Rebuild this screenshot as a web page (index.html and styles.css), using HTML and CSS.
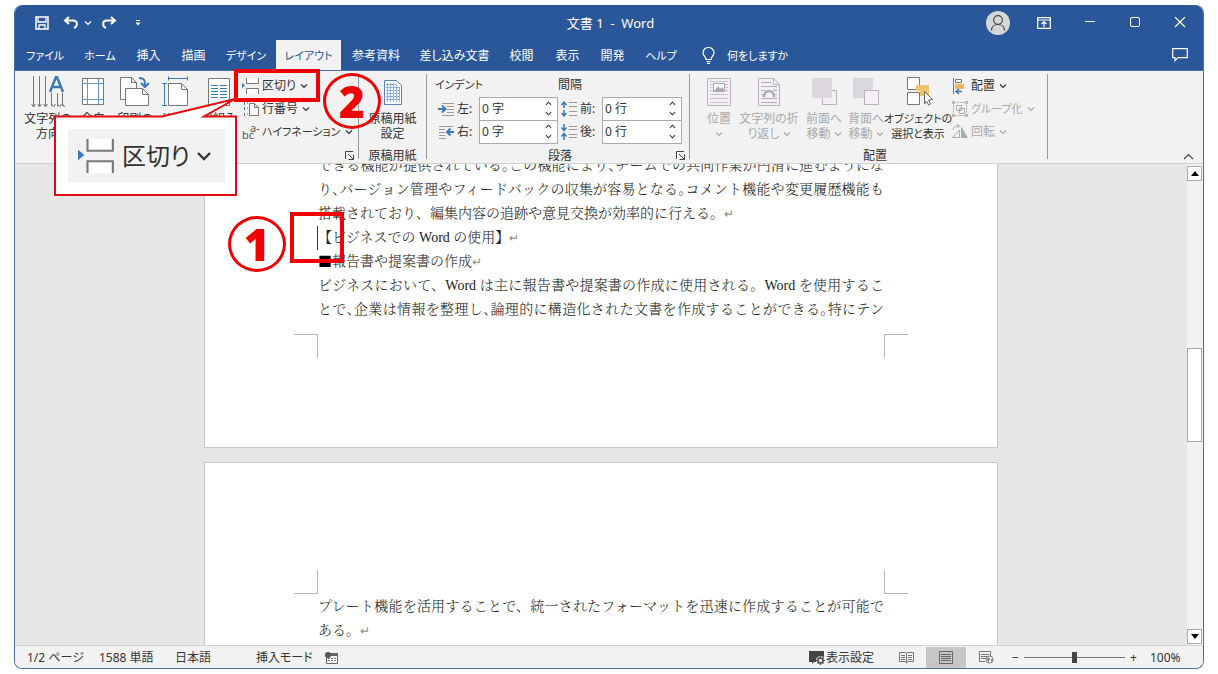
FILE: index.html
```html
<!DOCTYPE html>
<html lang="ja">
<head>
<meta charset="utf-8">
<meta name="viewport" content="width=device-width, initial-scale=1">
<title>文書 1 - Word</title>
<link rel="stylesheet" href="styles.css">
</head>
<body>
<svg class="defs" aria-hidden="true">
  <symbol id="chev" viewBox="0 0 8 8"><path d="M1 2.5 4 5.5 7 2.5" fill="none" stroke="currentColor" stroke-width="1.2"/></symbol>
  <symbol id="launch" viewBox="0 0 9 9"><path d="M.5 8V.5H8M3 3l5 5M8.500 3.500v5h-5" fill="none" stroke="#444"/></symbol>
  <symbol id="break" viewBox="0 0 18 18"><path d="M4.500 1v5.500h12V1M4.500 17v-5.500h12V17" fill="#fff" stroke="#777"/><path d="M0 6v5l3-2.500z" fill="#3a78b8"/></symbol>
</svg>
<div class="window">
  <header class="titlebar">
    <div class="quick">
      <button aria-label="上書き保存"><svg width="14" height="14" viewBox="0 0 14 14"><path d="M1 1h12v12H1z" fill="none" stroke="#fff" stroke-width="1.500"/><path d="M3 1.500v4.500h8V1.500M4 13V9h6v4" fill="none" stroke="#fff" stroke-width="1.300"/></svg></button>
      <button class="undo" aria-label="元に戻す"><svg width="16" height="14" viewBox="0 0 16 14"><path d="M6 1 2 4.500 6 8M2 4.500h8c5 0 5 6 1 7.500" fill="none" stroke="#fff" stroke-width="2"/></svg></button>
      <button aria-label="元に戻す履歴"><svg width="8" height="8"><use href="#chev"/></svg></button>
      <button class="redo" aria-label="やり直し"><svg width="16" height="14" viewBox="0 0 16 14"><path d="M10 1 14 4.500 10 8M14 4.500H6c-5 0-5 6-1 7.500" fill="none" stroke="#fff" stroke-width="2"/></svg></button>
      <button class="custom" aria-label="クイックアクセスのカスタマイズ"><svg width="6" height="6" viewBox="0 0 6 6"><path d="M1 .5h4" stroke="#fff"/><path d="M.5 2.500h5L3 5.500z" fill="#fff"/></svg></button>
    </div>
    <h1 class="title">文書 1&nbsp; -&nbsp; Word</h1>
    <div class="syscontrols">
      <button aria-label="アカウント"><svg width="24" height="24" viewBox="0 0 24 24"><circle cx="12" cy="12" r="12" fill="#d6d6d6"/><circle cx="12" cy="9" r="4.300" fill="none" stroke="#444" stroke-width="1.200"/><path d="M5.500 19.500c0-8 13-8 13 0" fill="none" stroke="#444" stroke-width="1.200"/></svg></button>
      <button aria-label="リボンの表示オプション"><svg width="14" height="12" viewBox="0 0 14 12"><path d="M.7.700h12.600v10.600H.7zM1 3h12M7 10V4.500M4.500 7 7 4.500 9.500 7" fill="none" stroke="#fff" stroke-width="1.200"/></svg></button>
      <button aria-label="最小化"><svg width="12" height="12" viewBox="0 0 12 12"><path d="M1 4.500h10" stroke="#fff"/></svg></button>
      <button aria-label="最大化"><svg width="12" height="12" viewBox="0 0 12 12"><rect x="1.500" y=".5" width="9" height="9" rx="1.500" fill="none" stroke="#fff"/></svg></button>
      <button aria-label="閉じる"><svg width="12" height="12" viewBox="0 0 12 12"><path d="m1 0 10 10M11 0 1 10" stroke="#fff" stroke-width="1.200"/></svg></button>
    </div>
  </header>
  <nav class="tabs">
    <button class="kana">ファイル</button><button class="kana">ホーム</button><button>挿入</button><button>描画</button><button class="kana">デザイン</button><button class="kana active">レイアウト</button><button>参考資料</button><button>差し込み文書</button><button>校閲</button><button>表示</button><button>開発</button><button class="kana">ヘルプ</button>
    <button class="tell kana"><svg width="13" height="17" viewBox="0 0 13 17"><path d="M4 12.500c0-3-3-3.500-3-7a5.500 5 0 0 1 11 0c0 3.500-3 4-3 7zM4.500 14.500h4M5 16.300h3" fill="none" stroke="#fff" stroke-width="1.200"/></svg>何をしますか</button>
    <button class="comment" aria-label="コメント"><svg width="16" height="14" viewBox="0 0 16 14"><path d="M.7.700h14.600v9H6l-3 3v-3H.7z" fill="none" stroke="#fff" stroke-width="1.200"/></svg></button>
  </nav>
  <section class="ribbon">
    <div class="group setup">
      <div class="tools">
        <button class="big dir"><svg width="34" height="32" viewBox="0 0 34 32"><path d="M2.500 0v30M8.500 0v30M14.500 0v30M20.500 17v13M26.500 17v13M31.500 17v13" stroke="#777"/><path d="m.5 28 2 3 2-3m2 0 2 3 2-3m2 0 2 3 2-3m4 0 2 3 2-3m2 0 2 3 2-3m1 0 2 3 2-3" fill="none" stroke="#777"/><path d="m19 16 6-15h1l6 15M21 11h9" fill="none" stroke="#3a78b8" stroke-width="2.500"/></svg><span>文字列の<br>方向</span></button>
        <button class="big"><svg width="32" height="32" viewBox="0 0 32 32"><path d="M5.500 2.500h21v26h-21z" fill="#fff" stroke="#777"/><path d="M10.500 3v25M21.500 3v25M6 7.500h20M6 23.500h20" stroke="#5f9bd1"/></svg><span>余白</span></button>
        <button class="big"><svg width="32" height="32" viewBox="0 0 32 32"><path d="M1.500 1.500h11l5 5v17h-16zM12.500 1.500v5h5" fill="#fff" stroke="#777"/><path d="M6.500 12.500h17l6 6v11h-23zM23.500 12.500v6h6" fill="#fff" stroke="#777"/><path d="M20 2c6 0 6 3 6 8M22 7l4 4 4-4" fill="none" stroke="#3a78b8" stroke-width="2"/></svg><span>印刷の<br>向き</span></button>
        <button class="big"><svg width="32" height="32" viewBox="0 0 32 32"><path d="M7.500 7.500h13l6 6v16h-19zM20.500 7.500v6h6" fill="#fff" stroke="#777"/><path d="M7 2.500h19M7.500.5v4M26.500.5v4M3.500 7v22M1 7.500h5M1 29.500h5" stroke="#3a78b8"/></svg><span>サイズ</span></button>
        <button class="big"><svg width="32" height="32" viewBox="0 0 32 32"><path d="M5.500 2.500h21v27h-21z" fill="#fff" stroke="#777"/><path d="M8 9.500h7m2 0h7M8 12.500h7m2 0h7M8 15.500h7m2 0h7M8 18.500h7m2 0h7M8 21.500h7m2 0h7" stroke="#3a78b8"/></svg><span>段組み</span></button>
        <div class="stack">
          <button class="small"><svg width="18" height="18"><use href="#break"/></svg>区切り<svg class="c" width="8" height="8"><use href="#chev"/></svg></button>
          <button class="small"><svg width="18" height="18" viewBox="0 0 18 18"><path d="M7.500 3.500h5l4 4v8h-9zM12.500 3.500v4h4" fill="#fff" stroke="#777"/><path d="M2.500 2v3M2.500 7v3M2.500 13v3M5 3h1M5 8h1M5 14h1" stroke="#3a78b8"/></svg>行番号<svg class="c" width="8" height="8"><use href="#chev"/></svg></button>
          <button class="small kana"><svg width="18" height="18" viewBox="0 0 18 18"><text x="0" y="16" class="icotext">bc</text><text x="8" y="9" class="icotext">a-</text></svg>ハイフネーション<svg class="c" width="8" height="8"><use href="#chev"/></svg></button>
        </div>
      </div>
      <div class="caption"><span></span><button aria-label="ページ設定の詳細"><svg width="9" height="9"><use href="#launch"/></svg></button></div>
    </div>
    <div class="group manuscript">
      <div class="tools">
        <button class="big paper"><svg width="32" height="32" viewBox="0 0 32 32"><path d="M7.500 4.500h12l5 5v19h-17z" fill="#fff" stroke="#5d81b8"/><path d="M10.500 7v19M13.500 7v19M16.500 7v19M19.500 9v17M22.500 11v15M9 8.500h10M9 11.500h14M9 14.500h14M9 17.500h14M9 20.500h14M9 23.500h14" stroke="#8fb0dc"/></svg><span>原稿用紙<br>設定</span></button>
      </div>
      <div class="caption">原稿用紙</div>
    </div>
    <div class="group para">
      <div class="fields">
        <fieldset><legend class="kana">インデント</legend>
          <div class="field"><svg width="16" height="14" viewBox="0 0 16 14"><path d="M4 1.500h12M9 4.500h7M9 7.500h7M9 10.500h7M4 13.500h12" stroke="#999"/><path d="M0 7h7M4 3.500 7.500 7 4 10.500" fill="none" stroke="#3a78b8" stroke-width="2"/></svg><label for="il">左:</label><span class="spin"><input id="il" type="text" value="0 字"><span><button aria-label="増やす"><svg width="7" height="7"><use href="#chev"/></svg></button><button aria-label="減らす"><svg width="7" height="7"><use href="#chev"/></svg></button></span></span></div>
          <div class="field"><svg width="16" height="14" viewBox="0 0 16 14"><path d="M1 1.500h14M1 4.500h6M1 7.500h6M1 10.500h6M1 13.500h7" stroke="#999"/><path d="M16 7H9m3.500-3.500L9 7l3.500 3.500" fill="none" stroke="#3a78b8" stroke-width="2"/></svg><label for="ir">右:</label><span class="spin"><input id="ir" type="text" value="0 字"><span><button aria-label="増やす"><svg width="7" height="7"><use href="#chev"/></svg></button><button aria-label="減らす"><svg width="7" height="7"><use href="#chev"/></svg></button></span></span></div>
        </fieldset>
        <fieldset><legend>間隔</legend>
          <div class="field"><svg width="16" height="16" viewBox="0 0 16 16"><path d="M8 1.500h8M8 5.500h8M8 10.500h8M8 14.500h8" stroke="#999"/><path d="M3 7V1M.5 4 3 1l2.500 3M3 9v6M.5 12 3 15l2.500-3" fill="none" stroke="#3a78b8" stroke-width="1.500"/></svg><label for="sb">前:</label><span class="spin"><input id="sb" type="text" value="0 行"><span><button aria-label="増やす"><svg width="7" height="7"><use href="#chev"/></svg></button><button aria-label="減らす"><svg width="7" height="7"><use href="#chev"/></svg></button></span></span></div>
          <div class="field"><svg width="16" height="16" viewBox="0 0 16 16"><path d="M8 2.500h8M8 5.500h8M8 10.500h8M8 13.500h8" stroke="#999"/><path d="M3 0v6M.5 3.500 3 6.500l2.500-3M3 16v-6M.5 12.500 3 9.500l2.500 3" fill="none" stroke="#3a78b8" stroke-width="1.500"/></svg><label for="sa">後:</label><span class="spin"><input id="sa" type="text" value="0 行"><span><button aria-label="増やす"><svg width="7" height="7"><use href="#chev"/></svg></button><button aria-label="減らす"><svg width="7" height="7"><use href="#chev"/></svg></button></span></span></div>
        </fieldset>
      </div>
      <div class="caption">段落<button aria-label="段落の詳細"><svg width="9" height="9"><use href="#launch"/></svg></button></div>
    </div>
    <div class="group arrange">
      <div class="tools">
        <button class="big pos" disabled><svg width="32" height="32" viewBox="0 0 32 32"><path d="M4.500 2.500h23v27h-23z" fill="#f4eff6" stroke="#b9b2bb"/><path d="M7 5.500h18M7 8.500h3m12 0h3M7 11.500h3m12 0h3M7 14.500h3m12 0h3M7 18.500h18M7 22.500h18M7 26.500h18" stroke="#c9c2cb"/><path d="M10.500 7.500h11v8h-11z" fill="#fff" stroke="#aaa"/><path d="m11 15 4-5 2 3 2-2 3 4z" fill="#aaa"/></svg><span>位置<br><svg class="c" width="8" height="8"><use href="#chev"/></svg></span></button>
        <button class="big wrap" disabled><svg width="32" height="32" viewBox="0 0 32 32"><path d="M5.500 2.500h15l6 6v21h-21zM20.500 2.500v6h6" fill="#f4eff6" stroke="#b9b2bb"/><path d="M8 6.500h10M8 10.500h16M8 14.500h4m8 0h4M8 18.500h2m12 0h2M8 22.500h16M8 26.500h16" stroke="#b3adb5"/><path d="M11 21c0-8 10-8 10 0" fill="none" stroke="#aaa" stroke-width="2.500"/></svg><span>文字列の折<br>り返し <svg class="c" width="8" height="8"><use href="#chev"/></svg></span></button>
        <button class="big move" disabled><svg width="32" height="32" viewBox="0 0 32 32"><path d="M14.500 14.500h14v14h-14z" fill="#f4eff6" stroke="#b9b2bb"/><path d="M4 2h20v20H4z" fill="#dcd6de"/></svg><span>前面へ<br>移動 <svg class="c" width="8" height="8"><use href="#chev"/></svg></span></button>
        <button class="big move" disabled><svg width="32" height="32" viewBox="0 0 32 32"><path d="M3 2h20v20H3z" fill="#dcd6de"/><path d="M14.500 14.500h14v14h-14z" fill="#f4eff6" stroke="#b9b2bb"/></svg><span>背面へ<br>移動 <svg class="c" width="8" height="8"><use href="#chev"/></svg></span></button>
        <button class="big objects"><svg width="32" height="32" viewBox="0 0 32 32"><path d="M5.500 1.500h12v12h-12zM5.500 16.500h12v12h-12z" fill="#fff" stroke="#777"/><path d="M14 9h13v11h-9v-5h-4z" fill="#efc36c"/><path d="m22.500 15.500 8 8-4 .5 2 4-2 1-2-4-2 3z" fill="#fff" stroke="#666"/></svg><span class="kana">オブジェクトの<br>選択と表示</span></button>
        <div class="stack">
          <button class="small"><svg width="18" height="18" viewBox="0 0 18 18"><path d="M2.500 1v16" stroke="#777"/><path d="M4.500 2.500h6v3h-6z" fill="#fff" stroke="#777"/><path d="M4 7h9v5H4z" fill="#efb565"/><path d="M11 14.500H5m3-2.500-3 2.500L8 17" fill="none" stroke="#3a78b8" stroke-width="1.500"/></svg>配置<svg class="c" width="8" height="8"><use href="#chev"/></svg></button>
          <button class="small kana" disabled><svg width="18" height="18" viewBox="0 0 18 18"><path d="M2.500 2.500h13v13h-13z" fill="none" stroke="#aaa" stroke-dasharray="2 1"/><path d="M5.500 5.500h5v5h-5zM8.500 8.500h5v5h-5z" fill="none" stroke="#aaa"/><path d="M1 1h3v3H1zm13 0h3v3h-3zM1 14h3v3H1zm13 0h3v3h-3z" fill="#bbb"/></svg>グループ化<svg class="c" width="8" height="8"><use href="#chev"/></svg></button>
          <button class="small" disabled><svg width="18" height="18" viewBox="0 0 18 18"><path d="M10 3v12h7z" fill="#aaa"/><path d="M8.500 7v7.500h-7zM2 7c1-4 3-4 6-4M6 1l2.500 2L6 5" fill="none" stroke="#aaa"/></svg>回転<svg class="c" width="8" height="8"><use href="#chev"/></svg></button>
        </div>
      </div>
      <div class="caption">配置</div>
    </div>
    <button class="collapse" aria-label="リボンを折りたたむ"><svg width="11" height="7" viewBox="0 0 11 7"><path d="m1 6 4.500-4.500L10 6" fill="none" stroke="#444" stroke-width="1.200"/></svg></button>
  </section>
  <div class="workspace">
    <main class="canvas">
      <article class="page first">
        <p class="full">できる機能が提供されている<i>。</i>この機能により<i>、</i>チームでの共同作業が円滑に進むようにな</p>
        <p class="full">り<i>、</i>バージョン管理やフィードバックの収集が容易となる<i>。</i>コメント機能や変更履歴機能も</p>
        <p>搭載されており、編集内容の追跡や意見交換が効率的に行える。<span class="ret">↵</span></p>
        <p class="caret">【ビジネスでの Word の使用】<span class="ret">↵</span></p>
        <p><span class="square">■</span>報告書や提案書の作成<span class="ret">↵</span></p>
        <p class="full">ビジネスにおいて、Word は主に報告書や提案書の作成に使用される。Word を使用するこ</p>
        <p class="full">とで<i>、</i>企業は情報を整理し<i>、</i>論理的に構造化された文書を作成することができる<i>。</i>特にテン</p>
        <div class="marks bottom"><span></span><span></span></div>
      </article>
      <article class="page second">
        <div class="marks top"><span></span><span></span></div>
        <p class="full">プレート機能を活用することで、統一されたフォーマットを迅速に作成することが可能で</p>
        <p>ある。<span class="ret">↵</span></p>
      </article>
    </main>
    <div class="scrollbar">
      <button aria-label="上へスクロール"><svg width="8" height="5" viewBox="0 0 8 5"><path d="M0 5 4 0l4 5z"/></svg></button>
      <div class="track"><div class="thumb"></div></div>
      <button aria-label="下へスクロール"><svg width="8" height="5" viewBox="0 0 8 5"><path d="m0 0 4 5 4-5z"/></svg></button>
    </div>
  </div>
  <footer class="status">
    <span class="pages">1/2 ページ</span><span class="words">1588 単語</span><span class="lang">日本語</span><span class="mode">挿入モード</span>
    <svg width="13" height="12" viewBox="0 0 13 12"><path d="M1.500 1.500h11v10h-11z" fill="#fff" stroke="#666"/><path d="M5 1h8v3H5z" fill="#666"/><circle cx="3" cy="3" r="3" fill="#555"/><path d="M3 6.500h8M3 8.500h8" stroke="#777" stroke-dasharray="2 1"/></svg>
    <button class="display"><svg width="16" height="15" viewBox="0 0 16 15"><path d="M0 1h15v7H9v4H5l-2 2v-2H0z" fill="#444"/><circle cx="11.500" cy="10.500" r="4.500" fill="#f2f2f2"/><circle cx="11.500" cy="10.500" r="2.500" fill="#f2f2f2" stroke="#444" stroke-width="1.500"/><path d="M11.500 6v2m0 5v2M7 10.500h2m5 0h2M8.500 7.500l1 1m4 4 1 1m0-6-1 1m-4 4-1 1" stroke="#444" stroke-width="1.200"/></svg>表示設定</button>
    <div class="views">
      <button aria-label="閲覧モード"><svg width="15" height="13" viewBox="0 0 15 13"><path d="M7.500 2.500 6 1.500H.5v9H6l1.500 1 1.500-1h5.500v-9H9l-1.500 1v10" fill="none" stroke="#777"/><path d="M2 4.500h4M2 6.500h4M2 8.500h4M9 4.500h4M9 6.500h4M9 8.500h4" stroke="#777"/></svg></button>
      <button class="on" aria-label="印刷レイアウト"><svg width="14" height="13" viewBox="0 0 14 13"><path d="M.5.5h13v12H.5zM2 3.500h10M2 5.500h10M2 7.500h10M2 9.500h10" fill="none" stroke="#666"/></svg></button>
      <button aria-label="Webレイアウト"><svg width="15" height="13" viewBox="0 0 15 13"><path d="M6 10.500H.5v-10h11v5M2 3.500h8M2 5.500h6M2 7.500h5" fill="none" stroke="#777"/><circle cx="10.500" cy="8.500" r="3.500" fill="#f2f2f2" stroke="#777"/><path d="m8 8 2-2 1 2-2 3zm4 0 2 0-2 3z" fill="#777"/></svg></button>
    </div>
    <div class="zoom"><button aria-label="縮小">−</button><input type="range" min="0" max="100" value="50" aria-label="ズーム"><button aria-label="拡大">+</button></div>
    <span class="pct">100%</span>
  </footer>

  <div class="callout"><svg width="184" height="98" viewBox="0 0 184 98"><path d="M1 18.500h107L181 1 150 18.500h32V97H1z" fill="#fff" stroke="#e30b0b" stroke-width="2"/></svg><div class="callout-text"><svg width="38" height="38"><use href="#break"/></svg><span>区切り</span><svg width="16" height="16"><use href="#chev"/></svg></div></div>
  <div class="frame frame-button"></div>
  <div class="frame frame-cursor"></div>
  <div class="num num-one">1</div>
  <div class="num num-two">2</div>
</div>
</body>
</html>
```
FILE: styles.css
```css
* { box-sizing: border-box; }
body {
  margin: 0;
  padding: 5px 14px;
  height: 100vh;
  background: #fff;
  color: #333;
  font: 12px/15px "Noto Sans", "Noto Sans CJK JP", sans-serif;
  font-feature-settings: "palt";
}
button, input {
  font: inherit;
  font-feature-settings: inherit;
  color: inherit;
  border: 0;
  padding: 0;
  background: none;
  margin: 0;
}
svg { flex: none; }
.defs { position: absolute; width: 0; height: 0; }
.icotext { font: 11px "Noto Sans", sans-serif; fill: #555; }
.kana { font-size: 11px; }
.window {
  position: relative;
  display: flex;
  flex-direction: column;
  height: 100%;
  border: 1px solid #4a6ea5;
  border-top: 0;
  border-radius: 8px;
}

.titlebar {
  display: grid;
  grid-template-columns: 1fr auto 1fr;
  align-items: center;
  height: 35px;
  padding: 0 17px 0 20px;
  background: #2a579a;
  border-radius: 8px 8px 0 0;
  color: #fff;
}
.quick, .syscontrols { display: flex; align-items: center; }
.quick button, .syscontrols button { display: flex; }
.undo { margin-left: 14px; }
.undo + button { margin: 0 9px 0 5px; }
.custom { margin-left: 18px; }
.title { margin: 0; padding-top: 2px; font-size: 13px; font-weight: 400; }
.syscontrols { justify-content: flex-end; gap: 33px; }
.syscontrols button:first-child { margin-right: -6px; }

.tabs {
  display: grid;
  grid-template-columns: 58px 52px 45px 45px 60px 65px 70px 87px 47px 45px 45px 52px auto 1fr;
  height: 31px;
  padding-left: 1px;
  background: #2a579a;
  border-bottom: 1px solid #4a6ea5;
  color: #fff;
}
.tabs button { white-space: nowrap; }
.tabs .active { background: #f2f2f2; color: #2a579a; }
.tabs .tell { display: flex; align-items: center; gap: 12px; padding-left: 15px; }
.tabs .comment { justify-self: end; padding: 0 15px; display: flex; align-items: center; }

.ribbon {
  display: flex;
  height: 93px;
  padding: 3px 0 0;
  background: #f2f2f2;
  border-bottom: 1px solid #d2d2d2;
}
.group {
  display: flex;
  flex-direction: column;
  justify-content: space-between;
  border-right: 1px solid #999;
  margin-bottom: 4px;
}
.setup { width: 344px; padding-left: 9px; }
.manuscript { width: 68px; }
.para { width: 263px; padding-left: 8px; }
.arrange { width: 358px; padding-left: 13px; }
.tools { display: flex; }
.manuscript .tools { justify-content: center; }
.caption { display: flex; justify-content: center; height: 15px; margin-bottom: -4px; }
.setup .caption, .para .caption { display: grid; grid-template-columns: 1fr auto 1fr; padding-right: 4px; }
.para .caption::before { content: ""; }
.caption button { display: flex; align-items: center; justify-content: flex-end; }
.setup .caption button { grid-column: 3; }
.big {
  display: flex;
  flex-direction: column;
  align-items: center;
  gap: 3px;
  width: 42px;
  padding-top: 2px;
  white-space: nowrap;
}
.big svg { display: block; }
.big .c { display: inline-block; }
.dir { width: 48px; }
.paper { width: 60px; }
.pos { width: 32px; }
.wrap { width: 68px; }
.objects { width: 62px; }
button:disabled { color: #a9a9a9; }
.stack { display: flex; flex-direction: column; align-items: flex-start; padding-left: 2px; }
.small { display: flex; align-items: center; gap: 2px; height: 23px; white-space: nowrap; }
.small .c { margin-left: 2px; }

.fields { display: grid; grid-template-columns: 123px 124px; }
fieldset { border: 0; margin: 0; padding: 0; min-width: 0; }
legend { padding: 0; height: 23px; line-height: 22px; }
.field { display: flex; align-items: center; gap: 3px; height: 23px; padding-left: 3px; }
.field label { width: 19px; }
.spin { display: flex; flex: 1; min-width: 0; height: 24px; border: 1px solid #ababab; background: #fff; }
.spin input { flex: 1; width: 100%; min-width: 0; padding-left: 2px; }
.spin > span { display: flex; flex-direction: column; justify-content: space-around; padding: 1px 5px 1px 0; }
.spin button { display: flex; }
.spin button:first-child svg { transform: rotate(180deg); }
.collapse { margin: auto 9px 3px auto; display: flex; }

.workspace { display: flex; flex: 1; min-height: 0; background: #e6e6e6; }
.canvas { flex: 1; min-width: 0; overflow: hidden; display: flex; flex-direction: column; align-items: center; gap: 14px; }
.page {
  flex: none;
  width: 794px;
  max-width: 100%;
  padding: 0 113px;
  background: #fff;
  border: 1px solid #c8c8c8;
  color: #222;
  font: 14px/24px "Liberation Serif", "Noto Serif CJK JP", "Noto Sans CJK JP", serif;
  font-weight: 300;
  font-feature-settings: normal;
  text-spacing-trim: space-all;
}
.page.first { margin-top: -11px; padding-bottom: 89px; }
.page.second { padding: 107px 113px 24px; }
.page p { margin: 0; white-space: nowrap; }
.page p.full { text-align-last: justify; text-align: justify; }
.page i { font-style: normal; font-feature-settings: "halt"; }
.square { font-family: "Noto Sans CJK JP", sans-serif; line-height: 20px; color: #000; }
.ret { color: #888; font-size: 12px; font-family: "DejaVu Sans", sans-serif; }
.caret { box-shadow: -1px 0 #333; }
.marks { display: flex; justify-content: space-between; margin: 0 -24px; }
.marks span { width: 24px; height: 24px; border: 0 solid #b5b5b5; }
.marks.bottom { margin-top: 12px; }
.marks.top { margin-bottom: 1px; }
.marks span:first-child { border-right-width: 1px; }
.marks span:last-child { border-left-width: 1px; }
.marks.bottom span { border-top-width: 1px; }
.marks.top span { border-bottom-width: 1px; }

.scrollbar { display: flex; flex-direction: column; width: 16px; padding: 2px 1px 1px 0; background: #f2f2f2; }
.scrollbar button { display: flex; align-items: center; justify-content: center; height: 15px; background: #fff; border: 1px solid #aaa; }
.track { flex: 1; display: grid; grid-template-rows: 168fr 94fr 188fr; }
.thumb { grid-row: 2; background: #fff; border: 1px solid #aaa; }

.status {
  display: flex;
  align-items: center;
  height: 23px;
  padding: 1px 19px 0 12px;
  background: #f2f2f2;
  border-top: 1px solid #d2d2d2;
  border-radius: 0 0 8px 8px;
  white-space: nowrap;
}
.pages { width: 72px; }
.words { width: 76px; }
.lang { width: 81px; }
.mode { width: 69px; }
.display { display: flex; align-items: center; gap: 1px; margin-left: auto; }
.views { display: flex; align-self: stretch; margin-left: 12px; }
.views button { width: 40px; display: flex; align-items: center; justify-content: center; }
.views .on { background: #c6c6c6; }
.zoom { display: flex; align-items: center; gap: 4px; margin-left: 5px; }
.zoom button { width: 9px; }
.zoom input { appearance: none; width: 101px; height: 12px; background: linear-gradient(#777, #777) center / 100% 1px no-repeat; }
.zoom input::-webkit-slider-thumb { appearance: none; width: 5px; height: 11px; background: #444; }
.pct { width: 34px; margin-left: 12px; }

.callout { position: absolute; left: 39px; top: 93px; }
.callout > svg { display: block; }
.callout-text {
  position: absolute;
  left: 14px;
  top: 31px;
  display: flex;
  align-items: center;
  gap: 6px;
  width: 157px;
  height: 53px;
  padding-left: 10px;
  background: #f2f2f2;
  font-size: 24px;
  line-height: 32px;
}
.frame { position: absolute; border: 4px solid #f00000; }
.frame-button { left: 219px; top: 64px; width: 86px; height: 33px; }
.frame-cursor { left: 275px; top: 207px; width: 54px; height: 51px; }
.num {
  position: absolute;
  display: flex;
  align-items: center;
  justify-content: center;
  width: 58px;
  height: 56px;
  border: 3px solid #f00000;
  border-radius: 50%;
  color: #f00000;
  font: 900 44px/50px "Noto Sans", "Open Sans", sans-serif;
}
.num-one { left: 213px; top: 211px; }
.num-two { left: 308px; top: 68px; }
```
